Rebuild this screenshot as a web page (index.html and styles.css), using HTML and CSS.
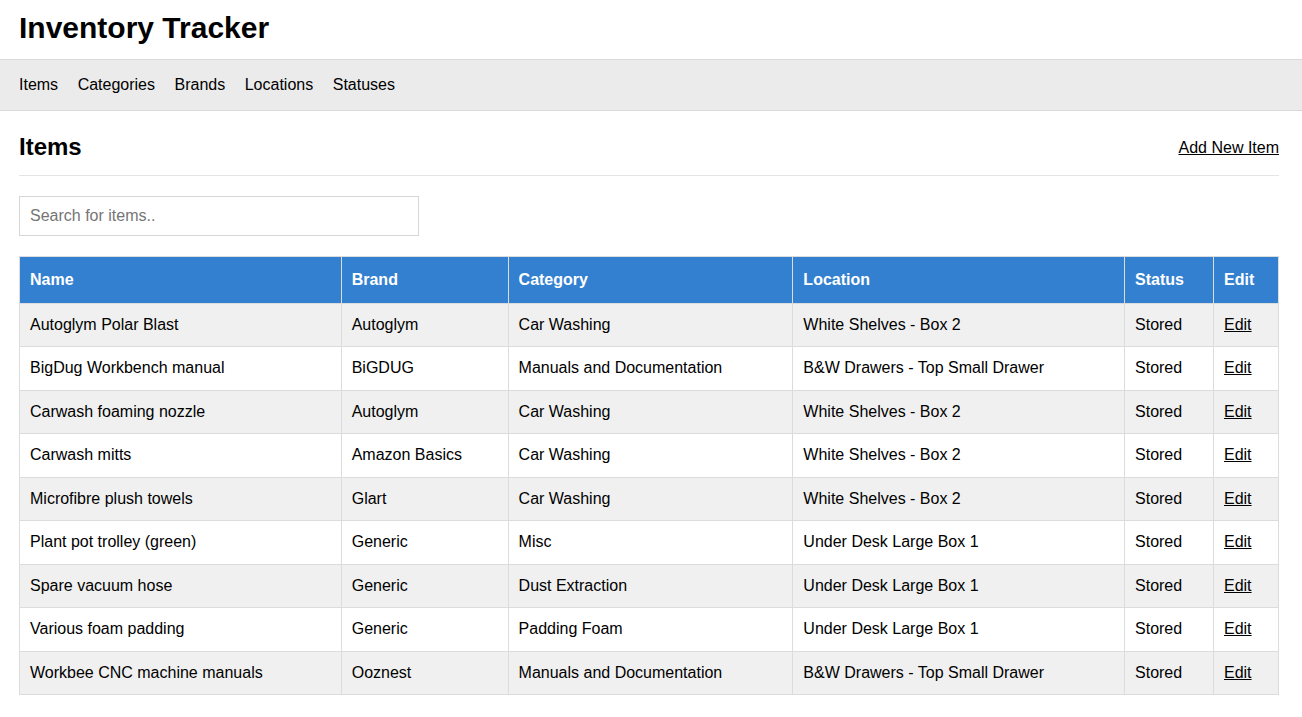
FILE: index.html
```html
<!DOCTYPE html>
<html>
<head>
<meta charset="utf-8">
<title>Inventory Tracker</title>
<link rel="stylesheet" href="styles.css">
</head>
<body>
<header class="site-header">
  <h1 class="site-title">Inventory Tracker</h1>
</header>
<nav class="nav">
  <a href="#">Items</a>
  <a href="#">Categories</a>
  <a href="#">Brands</a>
  <a href="#">Locations</a>
  <a href="#">Statuses</a>
</nav>
<main class="main">
  <div class="page-head">
    <h2 class="page-title">Items</h2>
    <a class="add-link" href="#">Add New Item</a>
  </div>
  <input class="search" type="text" placeholder="Search for items..">
  <table class="items">
    <thead>
      <tr>
        <th class="c-name">Name</th>
        <th class="c-brand">Brand</th>
        <th class="c-cat">Category</th>
        <th class="c-loc">Location</th>
        <th class="c-status">Status</th>
        <th class="c-edit">Edit</th>
      </tr>
    </thead>
    <tbody>
      <tr><td>Autoglym Polar Blast</td><td>Autoglym</td><td>Car Washing</td><td>White Shelves - Box 2</td><td>Stored</td><td><a href="#">Edit</a></td></tr>
      <tr><td>BigDug Workbench manual</td><td>BiGDUG</td><td>Manuals and Documentation</td><td>B&amp;W Drawers - Top Small Drawer</td><td>Stored</td><td><a href="#">Edit</a></td></tr>
      <tr><td>Carwash foaming nozzle</td><td>Autoglym</td><td>Car Washing</td><td>White Shelves - Box 2</td><td>Stored</td><td><a href="#">Edit</a></td></tr>
      <tr><td>Carwash mitts</td><td>Amazon Basics</td><td>Car Washing</td><td>White Shelves - Box 2</td><td>Stored</td><td><a href="#">Edit</a></td></tr>
      <tr><td>Microfibre plush towels</td><td>Glart</td><td>Car Washing</td><td>White Shelves - Box 2</td><td>Stored</td><td><a href="#">Edit</a></td></tr>
      <tr><td>Plant pot trolley (green)</td><td>Generic</td><td>Misc</td><td>Under Desk Large Box 1</td><td>Stored</td><td><a href="#">Edit</a></td></tr>
      <tr><td>Spare vacuum hose</td><td>Generic</td><td>Dust Extraction</td><td>Under Desk Large Box 1</td><td>Stored</td><td><a href="#">Edit</a></td></tr>
      <tr><td>Various foam padding</td><td>Generic</td><td>Padding Foam</td><td>Under Desk Large Box 1</td><td>Stored</td><td><a href="#">Edit</a></td></tr>
      <tr><td>Workbee CNC machine manuals</td><td>Ooznest</td><td>Manuals and Documentation</td><td>B&amp;W Drawers - Top Small Drawer</td><td>Stored</td><td><a href="#">Edit</a></td></tr>
    </tbody>
  </table>
</main>
</body>
</html>
```

FILE: styles.css
```css
* { box-sizing: border-box; }
html, body {
  margin: 0;
  padding: 0;
  background: #fff;
  color: #000;
  font-family: "Liberation Sans", Arial, Helvetica, sans-serif;
  font-size: 16px;
}
a { color: #000; }

.site-header {
  height: 59px;
  padding: 0 19px;
  display: flex;
  align-items: center;
}
.site-title {
  margin: 0;
  font-size: 30px;
  font-weight: bold;
  line-height: 1;
  padding-bottom: 4px;
}

.nav {
  height: 52px;
  background: #ebebeb;
  border-top: 1px solid #d9d9d9;
  border-bottom: 1px solid #d9d9d9;
  display: flex;
  align-items: center;
  gap: 19.5px;
  padding: 0 19px;
}
.nav a {
  text-decoration: none;
  color: #000;
  font-size: 16px;
}

.main {
  padding: 0 23px 0 19px;
}
.page-head {
  display: flex;
  justify-content: space-between;
  align-items: center;
  height: 65px;
  border-bottom: 1px solid #e5e5e5;
  padding-top: 7px;
}
.page-title {
  margin: 0;
  font-size: 24px;
  font-weight: bold;
}
.add-link {
  font-size: 16px;
  color: #000;
  text-decoration: underline;
  padding-top: 2px;
}

.search {
  display: block;
  margin-top: 20px;
  width: 400px;
  height: 40px;
  border: 1px solid #d6d6d6;
  padding: 0 10px;
  font-family: "Liberation Sans", Arial, Helvetica, sans-serif;
  font-size: 16px;
  color: #000;
  outline: none;
}
.search::placeholder { color: #757575; }

.items {
  margin-top: 20px;
  width: 100%;
  border-collapse: collapse;
  font-size: 16px;
}
.items th, .items td {
  border: 1px solid #dcdcdc;
  text-align: left;
  padding: 12px 10px 12px 10px;
  line-height: 18.5px;
}
.items th {
  background: #3380d1;
  color: #fff;
  font-weight: bold;
  padding-top: 14px;
  padding-bottom: 13px;
}
.items tbody tr:nth-child(odd) td { background: #f0f0f0; }
.items tbody tr:nth-child(even) td { background: #fff; }
.items td a { color: #000; }

.c-name { width: 322px; }
.c-brand { width: 167px; }
.c-cat { width: 285px; }
.c-loc { width: 332px; }
.c-status { width: 89px; }
.c-edit { width: 65px; }
```
